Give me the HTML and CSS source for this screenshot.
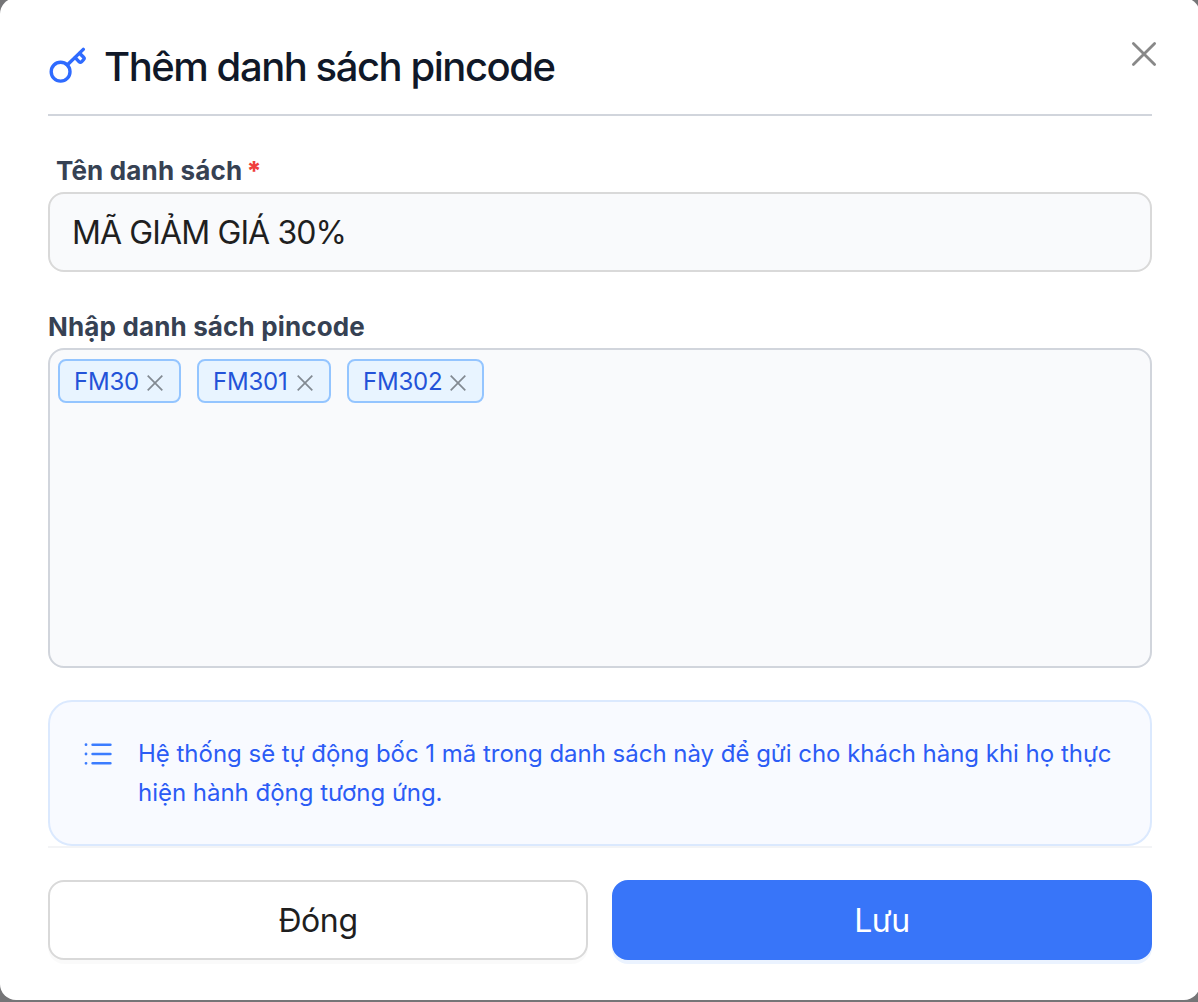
FILE: index.html
```html
<!DOCTYPE html>
<html lang="vi">
<head>
  <meta charset="UTF-8" />
  <meta name="viewport" content="width=device-width, initial-scale=1.0" />
  <title>Thêm danh sách pincode</title>
  <link rel="stylesheet" href="styles.css">
</head>
<body>
  <div class="modal" role="dialog">
    <button class="modal-close" type="button" aria-label="Close">
      <svg width="26" height="26" viewBox="0 0 26 26" fill="none" stroke="#888" stroke-width="2.8" stroke-linecap="round"><path d="M2.4 2.4l21.2 21.2M23.6 2.4L2.4 23.6" /></svg>
    </button>

    <header class="modal-header">
      <svg class="key-icon" width="40" height="40" viewBox="0 0 40 40" fill="none" stroke="#2f6bff" stroke-width="3.4" stroke-linecap="round" stroke-linejoin="round">
        <circle cx="12.6" cy="24.7" r="9.4" />
        <path d="M19.5 17.8L35.3 2.4" />
        <path d="M27.2 10.6l4 4.2c.8.8 1.5.8 2.3 0l2.1-2.2c.8-.8.8-1.5 0-2.3L31.6 6.2" />
      </svg>
      <h1>Thêm danh sách pincode</h1>
    </header>

    <label class="label label-name" for="listName">Tên danh sách <span class="required">*</span></label>
    <input class="text-input" type="text" id="listName" value="MÃ GIẢM GIÁ 30%" />

    <div class="label label-codes">Nhập danh sách pincode</div>
    <div class="tag-box">
      <span class="tag tag-1">FM30
        <svg width="16" height="16" viewBox="0 0 16 16" stroke="#828a92" stroke-width="1.7"><path d="M.7.7l14.6 14.6M15.3.7L.7 15.3" /></svg>
      </span>
      <span class="tag tag-2">FM301
        <svg width="16" height="16" viewBox="0 0 16 16" stroke="#828a92" stroke-width="1.7"><path d="M.7.7l14.6 14.6M15.3.7L.7 15.3" /></svg>
      </span>
      <span class="tag tag-3">FM302
        <svg width="16" height="16" viewBox="0 0 16 16" stroke="#828a92" stroke-width="1.7"><path d="M.7.7l14.6 14.6M15.3.7L.7 15.3" /></svg>
      </span>
    </div>

    <div class="note">
      <svg class="list-icon" width="28" height="24" viewBox="0 0 28 24" fill="none" stroke="#3b7cff" stroke-width="2.6" stroke-linecap="round">
        <path d="M8.6 2.7h17.8M8.6 12h17.8M8.6 21.3h17.8" />
        <path stroke-width="2.8" d="M2 2.7h.01M2 12h.01M2 21.3h.01" />
      </svg>
      <p>Hệ thống sẽ tự động bốc 1 mã trong danh sách này để gửi cho khách hàng khi họ thực<br>hiện hành động tương ứng.</p>
    </div>

    <footer class="modal-footer">
      <button class="btn btn-default" type="button">Đóng</button>
      <button class="btn btn-primary" type="button">Lưu</button>
    </footer>
  </div>
</body>
</html>
```
FILE: styles.css
```css
* {
  box-sizing: border-box;
}
body {
  margin: 0;
  height: 1002px;
  overflow: hidden;
  background: #757577;
  font-family: Inter, sans-serif;
}
.modal {
  position: relative;
  width: 1200px;
  height: 1002px;
  margin-top: -2px;
  padding: 34px 48px 40px;
  background: #fff;
  border-radius: 16px;
}
.modal-close {
  position: absolute;
  top: 43px;
  right: 43px;
  padding: 0;
  border: none;
  background: none;
}
.modal-close svg {
  display: block;
}
.modal-header {
  display: flex;
  align-items: center;
  gap: 16px;
  height: 84px;
  padding-bottom: 12px;
  border-bottom: 2px solid #d1d5dc;
}
.modal-header h1 {
  margin: 0;
  font-size: 40px;
  font-weight: 550;
  line-height: 56px;
  letter-spacing: -1.45px;
  color: #101828;
}
.label {
  display: block;
  font-size: 26px;
  font-weight: 700;
  line-height: 38px;
  letter-spacing: 0.15px;
  padding-bottom: 2px;
  color: #364153;
}
.label-name {
  margin-top: 36px;
  padding-left: 8px;
}
.required {
  margin-left: -2px;
  color: #ef3e3e;
  font-weight: 800;
}
.text-input {
  display: block;
  width: 100%;
  height: 80px;
  padding: 1px 22px 0;
  border: 2px solid #d9d9d9;
  border-radius: 16px;
  background: #f9fafc;
  color: #1f1f1f;
  font-family: inherit;
  font-size: 32px;
  letter-spacing: -0.88px;
}
.label-codes {
  margin-top: 36px;
}
.tag-box {
  display: flex;
  align-items: flex-start;
  gap: 16px;
  height: 320px;
  padding: 9px 8px;
  border: 2px solid #d1d5dc;
  border-radius: 16px;
  background: #f9fafc;
}
.tag {
  display: flex;
  align-items: center;
  justify-content: space-between;
  height: 44px;
  padding: 2px 16px 0 14px;
  border: 2px solid #94c5ff;
  border-radius: 8px;
  background: #e8f4ff;
  color: #2353d8;
  font-size: 24px;
  line-height: 38px;
  letter-spacing: -0.2px;
}
.tag svg {
  margin-top: 2px;
}
.tag-1 {
  width: 123px;
}
.tag-2 {
  width: 134px;
}
.tag-3 {
  width: 137px;
}
.note {
  display: flex;
  gap: 26px;
  height: 146px;
  margin-top: 32px;
  padding: 32px 0 0 34px;
  border: 2px solid #dbe9fe;
  border-radius: 24px;
  background: #f8faff;
}
.list-icon {
  flex: none;
  margin-top: 8px;
}
.note p {
  margin: 0;
  color: #2b5cf5;
  font-size: 24px;
  line-height: 39px;
  letter-spacing: -0.02px;
  white-space: nowrap;
}
.modal-footer {
  display: flex;
  gap: 24px;
  padding-top: 32px;
  border-top: 2px solid #f3f4f6;
}
.btn {
  flex: 1;
  height: 80px;
  padding-top: 2px;
  border: 2px solid #d9d9d9;
  border-radius: 16px;
  background: #fff;
  color: #1f1f1f;
  font-family: inherit;
  font-size: 32px;
  letter-spacing: -0.4px;
  box-shadow: 0 4px 0 rgba(0, 0, 0, 0.02);
}
.btn-primary {
  border-color: #3875f9;
  background: #3875f9;
  color: #fff;
  box-shadow: 0 4px 0 #ebf3ff;
}
```
